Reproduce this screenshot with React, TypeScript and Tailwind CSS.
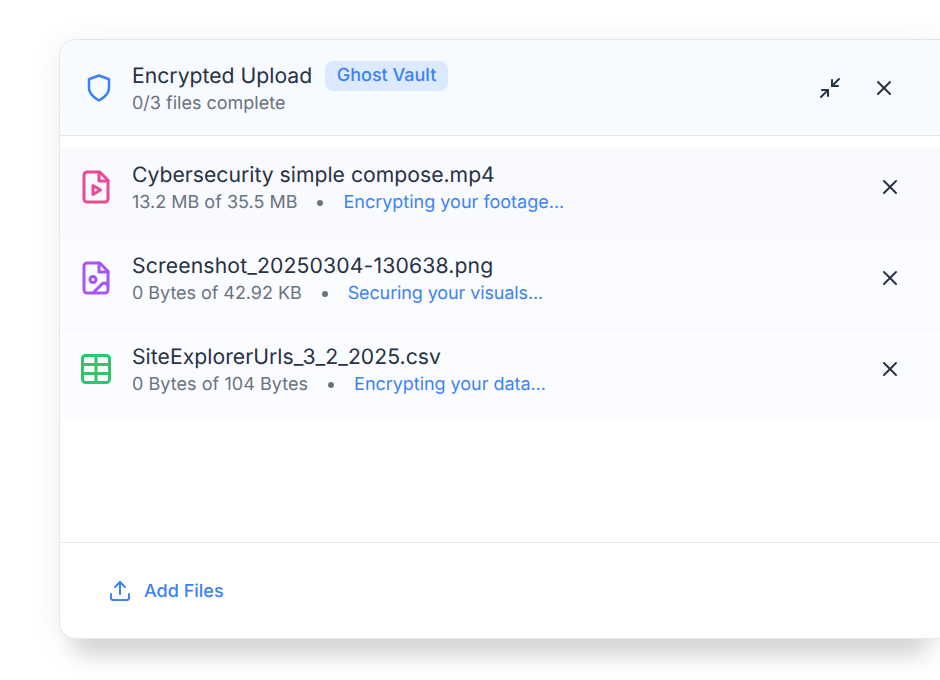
import React from "react";
import { Minimize2, Table, Upload, X } from "lucide-react";

// older lucide shapes, the current package draws these differently
const ShieldIcon = () => (
  <svg viewBox="0 0 24 24" fill="none" stroke="currentColor" strokeWidth={2} strokeLinecap="round" strokeLinejoin="round" className="w-[30px] h-[30px] shrink-0 text-[#3b82f6]">
    <path d="M12 22s8-4 8-10V5l-8-3-8 3v7c0 6 8 10 8 10z" />
  </svg>
);

const FileVideoIcon = () => (
  <svg viewBox="0 0 24 24" fill="none" stroke="currentColor" strokeWidth={2} strokeLinecap="round" strokeLinejoin="round" className="w-9 h-9 shrink-0 text-[#ec4899]">
    <path d="M14.5 2H6a2 2 0 0 0-2 2v16a2 2 0 0 0 2 2h12a2 2 0 0 0 2-2V7.5L14.5 2z" />
    <polyline points="14 2 14 8 20 8" />
    <path d="m10 11 5 3-5 3v-6Z" />
  </svg>
);

const FileImageIcon = () => (
  <svg viewBox="0 0 24 24" fill="none" stroke="currentColor" strokeWidth={2} strokeLinecap="round" strokeLinejoin="round" className="w-9 h-9 shrink-0 text-[#a855f7]">
    <path d="M14.5 2H6a2 2 0 0 0-2 2v16a2 2 0 0 0 2 2h12a2 2 0 0 0 2-2V7.5L14.5 2z" />
    <polyline points="14 2 14 8 20 8" />
    <circle cx="10" cy="13" r="2" />
    <path d="m20 17-1.09-1.09a2 2 0 0 0-2.82 0L10 22" />
  </svg>
);

const files = [
  {
    name: "Cybersecurity simple compose.mp4",
    size: "13.2 MB of 35.5 MB",
    status: "Encrypting your footage...",
    icon: <FileVideoIcon />,
    rowClass: "bg-[#f8fafd]",
    nameClass: "",
    sizeClass: "",
    statusClass: "",
  },
  {
    name: "Screenshot_20250304-130638.png",
    size: "0 Bytes of 42.92 KB",
    status: "Securing your visuals...",
    icon: <FileImageIcon />,
    rowClass: "bg-[#fbfcff]",
    nameClass: "tracking-[0.13px]",
    sizeClass: "tracking-[-0.05px]",
    statusClass: "tracking-[-0.12px]",
  },
  {
    name: "SiteExplorerUrls_3_2_2025.csv",
    size: "0 Bytes of 104 Bytes",
    status: "Encrypting your data...",
    icon: <Table className="w-9 h-9 shrink-0 text-[#2ec66b]" strokeWidth={2} />,
    rowClass: "bg-[#fbfcff]",
    nameClass: "tracking-[0.03px]",
    sizeClass: "tracking-[0.05px]",
    statusClass: "tracking-[-0.04px]",
  },
];

export default function App() {
  return (
    <div className="w-[940px] h-[680px] overflow-hidden bg-white pt-[39px] pl-[59px] font-['Inter',sans-serif] [text-rendering:geometricPrecision]">
      <div className="w-[896px] h-[600px] flex flex-col bg-white rounded-2xl border border-[#e5e7eb] shadow-[-7px_41px_20px_-23px_rgba(0,0,0,0.13),0_4px_30px_rgba(0,0,0,0.07)] overflow-hidden">
        {/* Header */}
        <div className="h-[96px] shrink-0 flex items-center bg-[#f7faff] border-b border-[#e5e7eb] pl-6 pr-[58px]">
          <ShieldIcon />
          <div className="ml-[18px] flex-1 pt-[1px]">
            <div className="flex items-center gap-[13px]">
              <span className="text-[21.2px] leading-7 text-[#273244]">Encrypted Upload</span>
              <span className="pl-[11.5px] pr-3 py-0.5 rounded-lg bg-[#dbeafe] text-[#3b82f6] text-lg leading-[26px] font-medium">Ghost Vault</span>
            </div>
            <p className="text-lg leading-[25px] text-[#6b7280]">0/3 files complete</p>
          </div>
          <Minimize2 className="w-6 h-6 text-[#273244]" />
          <X className="w-6 h-6 text-[#273244] ml-[30px]" />
        </div>

        {/* File list */}
        <div className="flex-1 pt-3">
          {files.map((file) => (
            <div key={file.name} className={`h-[91px] last:h-[90px] flex items-center pl-[18px] pr-[52px] pb-[13px] last:pb-[12px] border-b border-[#f3f4f6] last:border-b-0 ${file.rowClass}`}>
              {file.icon}
              <div className="ml-[18px] flex-1 pt-[3px]">
                <p className={`text-[21.2px] leading-7 text-[#273244] ${file.nameClass}`}>{file.name}</p>
                <div className="mt-[1px] flex items-center text-lg leading-[26px] text-[#6b7280]">
                  <span className={file.sizeClass}>{file.size}</span>
                  <span className="mx-5 w-[6px] h-[6px] rounded-full bg-[#6b7280]" />
                  <span className={`text-[#3b82f6] ${file.statusClass}`}>{file.status}</span>
                </div>
              </div>
              <X className="w-6 h-6 text-[#273244]" />
            </div>
          ))}
        </div>

        {/* Footer */}
        <div className="h-[96px] shrink-0 flex items-center border-t border-[#e5e7eb] pl-12">
          <Upload className="w-6 h-6 text-[#3b82f6]" />
          <span className="ml-3 mt-[2px] text-lg font-medium text-[#3b82f6]">Add Files</span>
        </div>
      </div>
    </div>
  );
}
